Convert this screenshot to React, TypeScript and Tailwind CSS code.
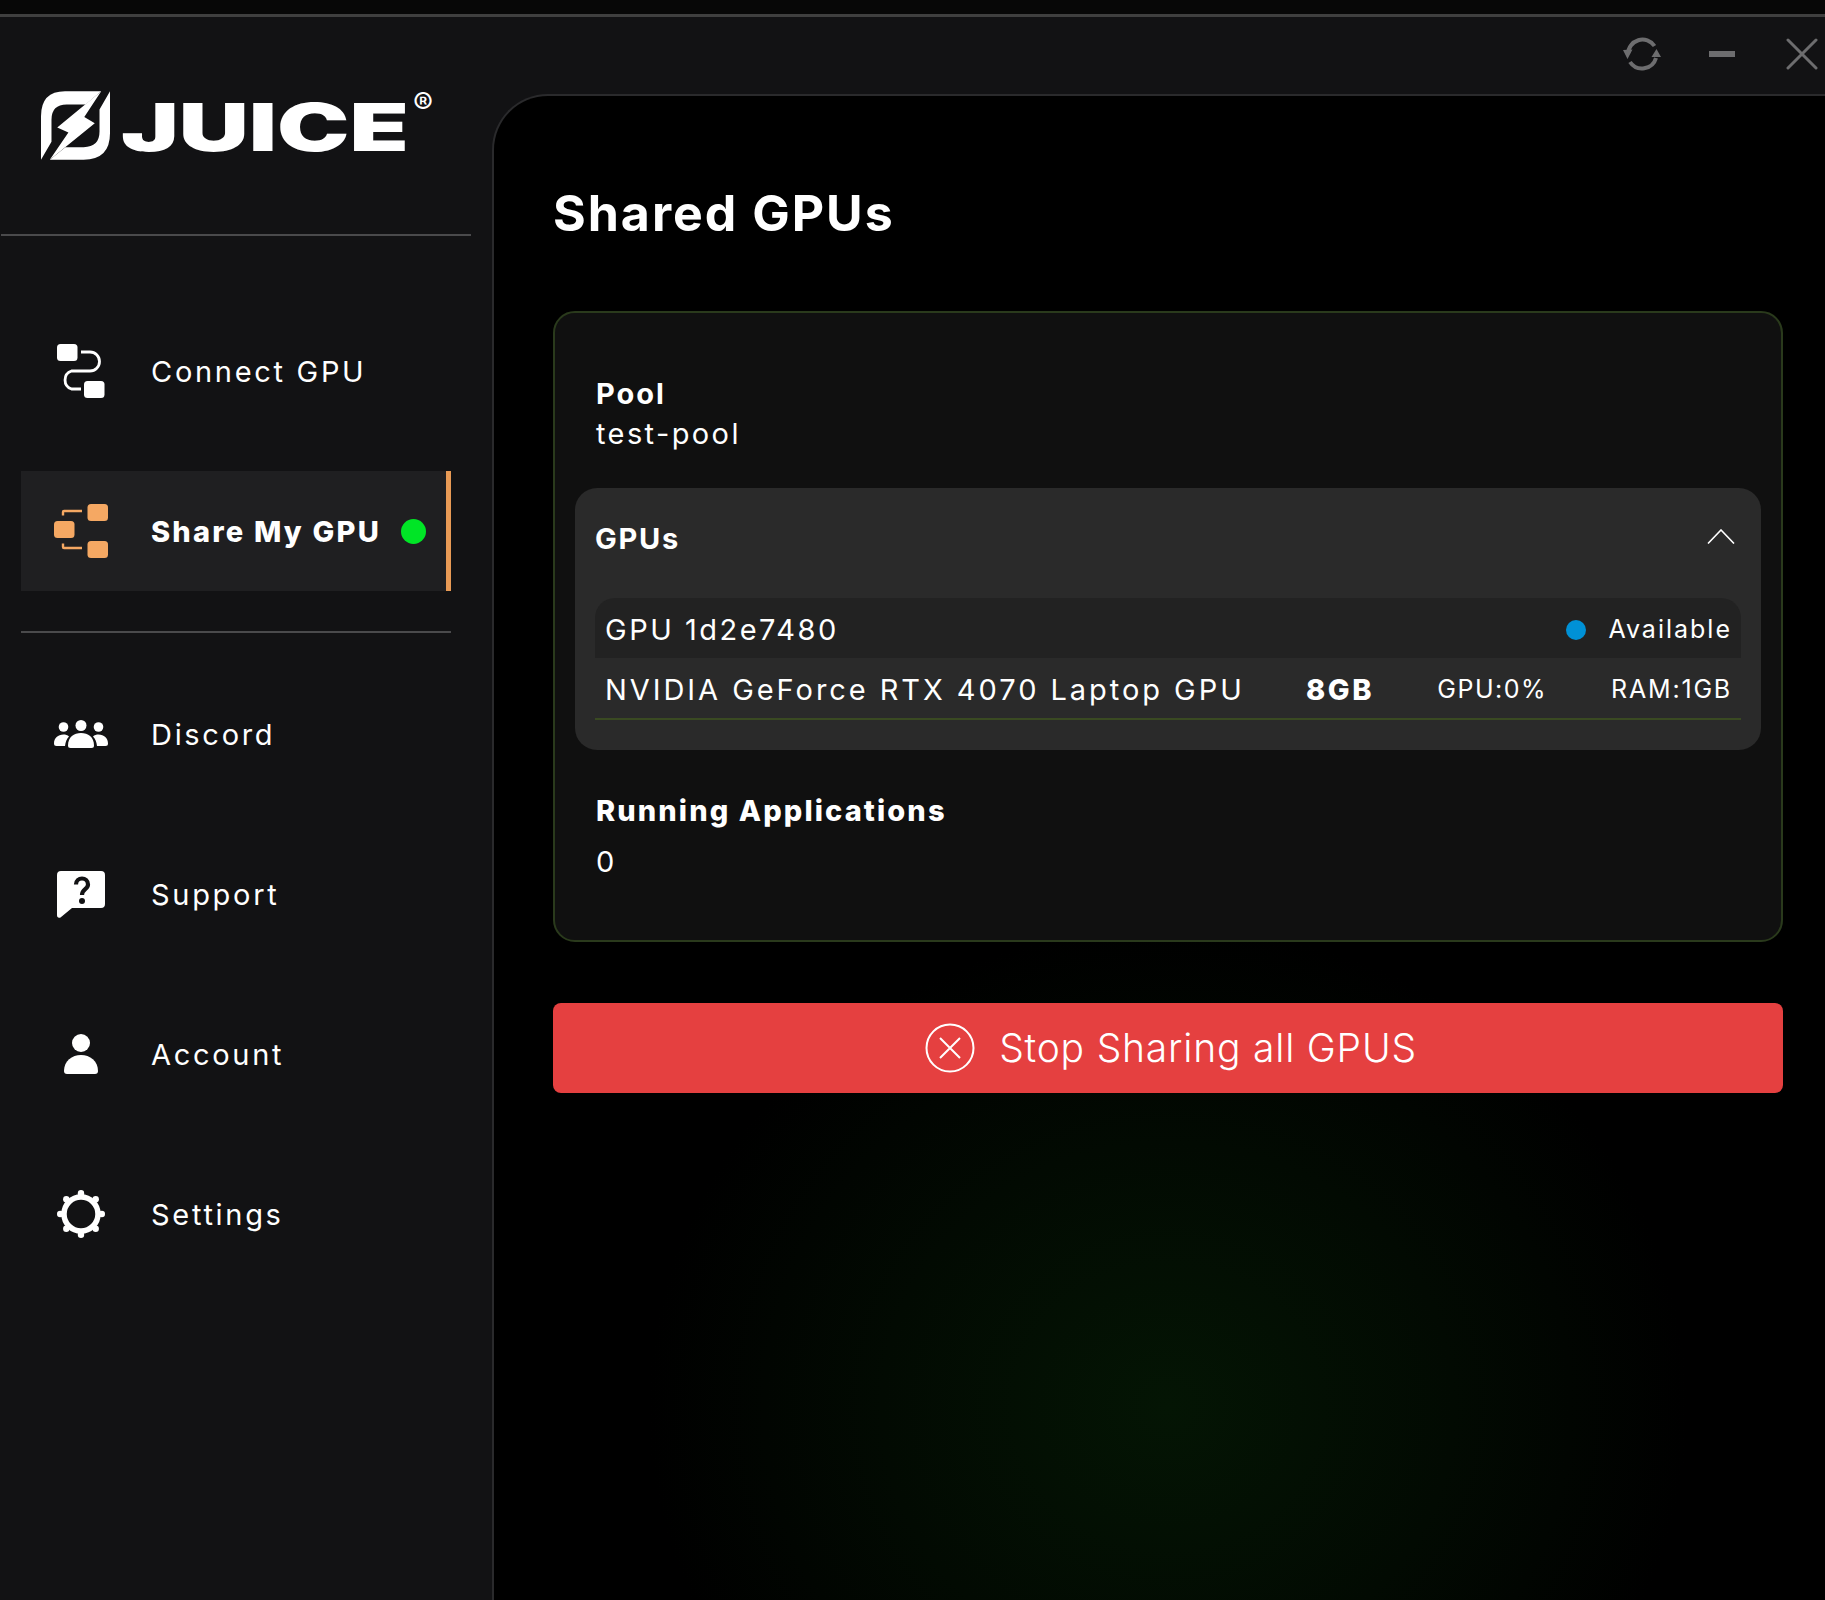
import { ReactNode } from "react";

const font = "font-['Inter','Liberation_Sans',sans-serif]";

function ConnectIcon() {
  return (
    <svg width="48" height="54" viewBox="0 0 48 54" fill="none">
      <rect x="0" y="0" width="20.5" height="17" rx="3.5" fill="white" />
      <rect x="27" y="37" width="20.5" height="17" rx="3.5" fill="white" />
      <path d="M24 8H33a9.5 9.5 0 0 1 0 19H14.5a9.5 9.5 0 0 0 0 18H24" stroke="white" strokeWidth="2.8" />
    </svg>
  );
}

function ShareIcon() {
  return (
    <svg width="54" height="54" viewBox="0 0 54 54" fill="#f5a863">
      <rect x="33.5" y="0" width="20.5" height="17" rx="3.5" />
      <rect x="0" y="17" width="20.5" height="17" rx="3.5" />
      <rect x="33.5" y="37" width="20.5" height="17" rx="3.5" />
      <path d="M9 11.5V8a1 1 0 0 1 1-1H28M9 39.5V43a1 1 0 0 0 1 1H28" stroke="#f5a863" strokeWidth="2.4" fill="none" />
    </svg>
  );
}

function UsersIcon() {
  return (
    <svg width="54" height="28" viewBox="0 0 54 28" fill="white">
      <circle cx="27" cy="5.5" r="5.5" />
      <circle cx="9.5" cy="7" r="4.8" />
      <circle cx="44.5" cy="7" r="4.8" />
      <path d="M14 25.5C14 17 20 13 27 13S40 17 40 25.5Q40 28 37.5 28H16.5Q14 28 14 25.5Z" />
      <path d="M0 23.5C0 18 4 14.5 9.5 14.5 11.5 14.5 13.5 15 15 16.5 12.5 19 11.5 22 11 26H2.5Q0 26 0 23.5Z" />
      <path d="M54 23.5C54 18 50 14.5 44.5 14.5 42.5 14.5 40.5 15 39 16.5 41.5 19 42.5 22 43 26H51.5Q54 26 54 23.5Z" />
    </svg>
  );
}

function SupportIcon() {
  return (
    <svg width="48" height="47" viewBox="0 0 48 47" fill="none">
      <path d="M4 0H44Q48 0 48 4V33Q48 37 44 37H15L3.5 46.5Q0 47.5 0 44V4Q0 0 4 0Z" fill="white" />
      <path d="M19 13.5C19 5.5 31 5.5 31 13.5C31 18.5 25 18 25 24" stroke="#121214" strokeWidth="4.2" />
      <circle cx="25" cy="30" r="3" fill="#121214" />
    </svg>
  );
}

function AccountIcon() {
  return (
    <svg width="34" height="40" viewBox="0 0 34 40" fill="white">
      <circle cx="17" cy="9" r="9" />
      <path d="M0 37C0 27 8 21 17 21S34 27 34 37Q34 40 31 40H3Q0 40 0 37Z" />
    </svg>
  );
}

function SettingsIcon() {
  return (
    <svg width="48" height="48" viewBox="-24 -24 48 48" fill="white">
      <circle cx="0" cy="0" r="17" fill="none" stroke="white" strokeWidth="5.5" />
      <circle cx="0" cy="-20.8" r="3.2" />
      <circle cx="0" cy="20.8" r="3.2" />
      <circle cx="-20.8" cy="0" r="3.2" />
      <circle cx="20.8" cy="0" r="3.2" />
      <circle cx="-14.7" cy="-14.7" r="3.2" />
      <circle cx="14.7" cy="-14.7" r="3.2" />
      <circle cx="-14.7" cy="14.7" r="3.2" />
      <circle cx="14.7" cy="14.7" r="3.2" />
    </svg>
  );
}

function LogoMark() {
  return (
    <svg width="69" height="69" viewBox="124 275 204 204" fill="white" className="shrink-0">
      <path d="M302 276H195Q124 276 124 350V478L155 425V360Q155 315 200 315H256Z" />
      <path d="M302 276L172 383 205 398 150 478 283 370 252 352Z" />
      <path d="M328 276V400Q328 478 250 478H150L196 441H250Q297 441 297 395V330Z" />
    </svg>
  );
}

function RefreshIcon() {
  return (
    <svg width="38" height="34" viewBox="0 0 38 34" fill="#6d6d6f">
      <path d="M5 17A14.5 14.5 0 0 1 31.5 9M33 21A14.5 14.5 0 0 1 7 25" fill="none" stroke="#6d6d6f" strokeWidth="4" />
      <path d="M0 13L9.5 12.5 4.5 22ZM38 20L28.5 20 33.5 12Z" />
    </svg>
  );
}

function NavItem({ icon, label }: { icon: ReactNode; label: string }) {
  return (
    <div className="flex h-[120px] items-center pl-[33px]">
      <div className="flex w-[54px] justify-center">{icon}</div>
      <span className="ml-[43px] text-[29px] leading-none tracking-[2.7px] text-white">{label}</span>
    </div>
  );
}

function Sidebar() {
  return (
    <aside className="flex w-[492px] shrink-0 flex-col">
      <div className="ml-[41px] flex h-[217px] items-start pt-[74px]">
        <LogoMark />
        <span className="ml-[11px] mt-[-2px] origin-left scale-x-[1.47] text-[66px] font-black leading-[76px] text-white">
          JUICE
        </span>
        <span className="ml-[96px] mt-[-3px] text-[30px] leading-none text-white">®</span>
      </div>
      <div className="ml-px h-[2px] w-[470px] bg-[#4a4a4c]" />
      <nav className="ml-[21px] mt-[75px] flex w-[430px] flex-col gap-10">
        <NavItem icon={<ConnectIcon />} label="Connect GPU" />
        <div className="flex h-[120px] items-center border-r-[5px] border-[#e89a55] bg-[#1f1f21] pl-[33px]">
          <div className="flex w-[54px] justify-center">
            <ShareIcon />
          </div>
          <span className="ml-[43px] text-[29px] font-extrabold leading-none tracking-[2.2px] text-white">Share My GPU</span>
          <span className="ml-[20px] h-[25px] w-[25px] rounded-full bg-[#00e526]" />
        </div>
        <div className="mb-px h-[2px] bg-[#4a4a4c]" />
        <NavItem icon={<UsersIcon />} label="Discord" />
        <NavItem icon={<SupportIcon />} label="Support" />
        <NavItem icon={<AccountIcon />} label="Account" />
        <NavItem icon={<SettingsIcon />} label="Settings" />
      </nav>
    </aside>
  );
}

function GpuPanel() {
  return (
    <div className="mx-[20px] mt-[34px] rounded-[22px] bg-[#2a2a2a] px-[20px] pb-[30px]">
      <div className="flex h-[110px] items-center justify-between pb-[8px]">
        <span className="text-[29px] font-bold tracking-[1.75px] text-white">GPUs</span>
        <svg width="28" height="15" viewBox="0 0 28 15" fill="none" className="mr-[6px] mt-[-6px]">
          <path d="M1 14.5L14 1 27 14.5" stroke="white" strokeWidth="1.6" />
        </svg>
      </div>
      <div className="flex h-[60px] items-center rounded-t-[20px] bg-[#222222] pl-[10px] pr-[9px] pt-[3px]">
        <span className="text-[29px] tracking-[2.5px] text-white">GPU 1d2e7480</span>
        <span className="ml-auto h-[20px] w-[20px] rounded-full bg-[#0091d6]" />
        <span className="ml-[22px] text-[25px] tracking-[2px] text-white">Available</span>
      </div>
      <div className="flex h-[62px] items-center border-b-2 border-[#3a4a22] pl-[10px] pr-[9px] pt-[3px]">
        <span className="text-[29px] tracking-[2.95px] text-white">NVIDIA GeForce RTX 4070 Laptop GPU</span>
        <span className="ml-auto text-[29px] font-extrabold tracking-[2.7px] text-white">8GB</span>
        <span className="ml-[63px] text-[25px] tracking-[1.5px] text-white">GPU:0%</span>
        <span className="ml-[64px] text-[25px] tracking-[1.8px] text-white">RAM:1GB</span>
      </div>
    </div>
  );
}

export default function App() {
  return (
    <div className={`flex h-[1600px] flex-col overflow-hidden bg-[#121214] ${font}`}>
      <div className="h-[17px] shrink-0 border-b-[3px] border-[#3f3f3f] bg-[#070707]" />
      <div className="flex flex-1">
        <Sidebar />
        <div className="flex min-w-0 flex-1 flex-col">
          <div className="flex h-[77px] shrink-0 items-center justify-end pb-[4px] pr-[7px]">
            <RefreshIcon />
            <div className="ml-[48px] h-[6px] w-[26px] bg-[#6d6d6f]" />
            <svg width="32" height="32" viewBox="0 0 32 32" className="ml-[51px]">
              <path d="M2 2L30 30M30 2L2 30" stroke="#6d6d6f" strokeWidth="3" strokeLinecap="round" />
            </svg>
          </div>
          <main className="flex-1 rounded-tl-[56px] border-l-2 border-t-2 border-[#2a2a2c] bg-black bg-[radial-gradient(ellipse_520px_480px_at_674px_1311px,#041504_0%,#020a02_55%,#000000_100%)] pl-[59px] pr-[42px]">
            <h1 className="mt-[83px] text-[50px] font-bold leading-[68px] tracking-[2px] text-white">Shared GPUs</h1>
            <section className="mt-[64px] h-[631px] rounded-[22px] border-2 border-[#2a3a1c] bg-[#101010]">
              <div className="pl-[41px] pt-[61px]">
                <div className="text-[29px] font-bold leading-[40px] tracking-[2px] text-white">Pool</div>
                <div className="text-[29px] leading-[40px] tracking-[2.4px] text-white">test-pool</div>
              </div>
              <GpuPanel />
              <div className="pl-[41px] pt-[41px]">
                <div className="text-[29px] font-extrabold leading-[40px] tracking-[2.1px] text-white">Running Applications</div>
                <div className="mt-[11px] text-[29px] leading-[40px] text-white">0</div>
              </div>
            </section>
            <button className="mt-[61px] flex h-[90px] w-full items-center justify-center rounded-[8px] bg-[#e54040] pl-[6px] text-white">
              <svg width="50" height="50" viewBox="0 0 50 50" fill="none">
                <circle cx="25" cy="25" r="23.5" stroke="white" strokeWidth="2" />
                <path d="M15 15L35 35M35 15L15 35" stroke="white" strokeWidth="2" />
              </svg>
              <span className="ml-[24px] text-[39px] font-light tracking-[0.8px]">Stop Sharing all GPUS</span>
            </button>
          </main>
        </div>
      </div>
    </div>
  );
}
